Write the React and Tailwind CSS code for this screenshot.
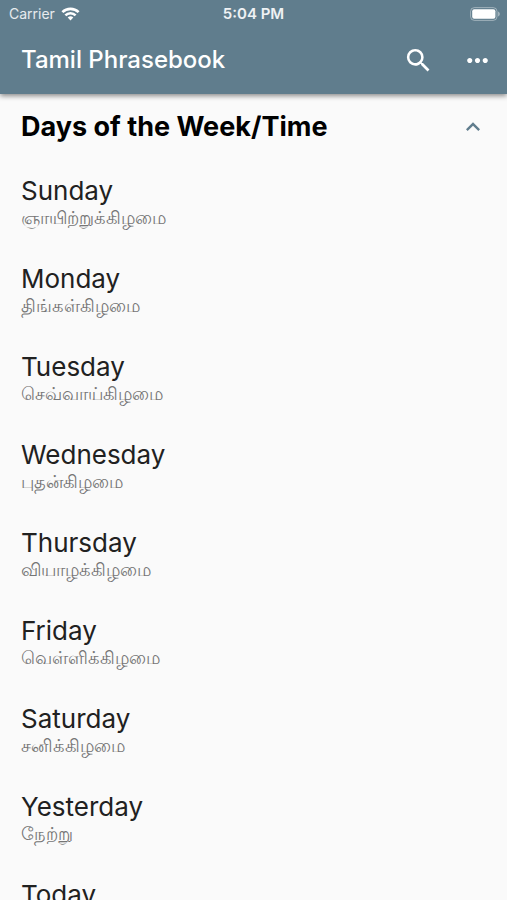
import { MdSearch, MdMoreHoriz, MdExpandLess } from 'react-icons/md';

const phrases = [
  { english: 'Sunday', tamil: 'ஞாயிற்றுக்கிழமை' },
  { english: 'Monday', tamil: 'திங்கள்கிழமை' },
  { english: 'Tuesday', tamil: 'செவ்வாய்கிழமை' },
  { english: 'Wednesday', tamil: 'புதன்கிழமை' },
  { english: 'Thursday', tamil: 'வியாழக்கிழமை' },
  { english: 'Friday', tamil: 'வெள்ளிக்கிழமை' },
  { english: 'Saturday', tamil: 'சனிக்கிழமை' },
  { english: 'Yesterday', tamil: 'நேற்று' },
  { english: 'Today', tamil: 'இன்று' },
];

function StatusBar() {
  return (
    <div className="grid h-7 grid-cols-3 items-center px-[7px]">
      <div className="flex items-center gap-1.5 pl-0.5 text-sm text-white/85">
        <span>Carrier</span>
        <svg width="19" height="14" viewBox="0 0 18 14" fill="none" stroke="white" strokeWidth="2.6" aria-hidden="true">
          <path d="M0.9 5.2a11.5 11.5 0 0 1 16.2 0" />
          <path d="M3.9 8.4a7.2 7.2 0 0 1 10.2 0" />
          <path d="M6.2 10.6a4 4 0 0 1 5.6 0L9 13.6z" fill="white" stroke="none" />
        </svg>
      </div>
      <span className="text-center text-[15px] font-semibold text-white/90">5:04 PM</span>
      <svg className="justify-self-end" width="30" height="14" viewBox="0 0 30 14" aria-hidden="true">
        <rect x="0.6" y="0.6" width="26.4" height="12.8" rx="3.8" fill="none" stroke="currentColor" strokeOpacity="0.4" />
        <rect x="2.2" y="2.2" width="23.2" height="9.6" rx="2" fill="currentColor" />
        <path d="M28.2 4.6c2 .8 2 4 0 4.8z" fill="currentColor" fillOpacity="0.5" />
      </svg>
    </div>
  );
}

export default function App() {
  return (
    <div className="min-h-screen bg-[#fafafa] font-['Inter','Noto_Sans',sans-serif]">
      {/* App bar */}
      <header className="sticky top-0 z-10 bg-[#607d8d] text-white shadow-[0_2px_5px_rgba(0,0,0,0.45)]">
        <StatusBar />
        <div className="flex h-[66px] items-center pr-3.5 pb-0.5 pl-[21px]">
          <h1 className="flex-1 text-2xl font-medium">Tamil Phrasebook</h1>
          <button type="button" aria-label="Search" className="mr-7">
            <MdSearch size={31} />
          </button>
          <button type="button" aria-label="More">
            <MdMoreHoriz size={31} />
          </button>
        </div>
      </header>

      {/* Phrase list */}
      <main>
        <button type="button" aria-expanded="true" className="flex h-[66px] w-full items-center pr-5 pl-[21px] text-left">
          <h2 className="flex-1 text-[27px] font-bold text-black">Days of the Week/Time</h2>
          <MdExpandLess size={28} className="text-[#607d8d]" />
        </button>
        <ul className="pt-3">
          {phrases.map((phrase) => (
            <li key={phrase.english} className="h-[88px] px-[21px]">
              <p className="text-[26px] leading-[38px] text-[#212121]">{phrase.english}</p>
              <p lang="ta" className="text-lg leading-4 text-[#757575]">{phrase.tamil}</p>
            </li>
          ))}
        </ul>
      </main>
    </div>
  );
}
